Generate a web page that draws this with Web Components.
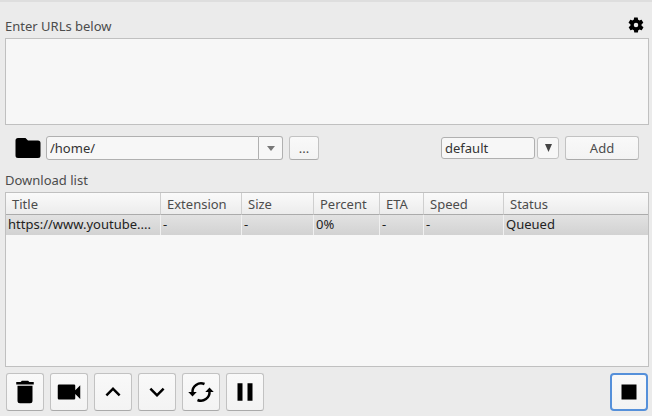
<!DOCTYPE html>
<html lang="en">
<head>
<meta charset="utf-8">
<meta name="viewport" content="width=device-width, initial-scale=1">
<title>Downloads</title>
<style>
  html, body {
    height: 100%;
    margin: 0;
  }

  body {
    background: #ebebeb;
    color: #4c4c4c;
    font: 13px/20px "Noto Sans", "Open Sans", sans-serif;
  }
</style>
</head>
<body>
<download-window></download-window>

<script>
const ICONS = {
  gear: '<path d="M19.4 13c0-.3.1-.7.1-1s0-.7-.1-1l2.1-1.6c.2-.2.2-.4.1-.6l-2-3.5c-.1-.2-.4-.3-.6-.2l-2.5 1c-.5-.4-1.1-.7-1.7-1l-.4-2.6c0-.3-.2-.5-.5-.5h-4c-.2 0-.4.2-.5.4L9 5.1c-.6.3-1.1.6-1.7 1l-2.5-1c-.2-.1-.5 0-.6.2l-2 3.5c-.1.2-.1.5.1.6L4.6 11c0 .3-.1.7-.1 1s0 .7.1 1l-2.1 1.6c-.2.2-.2.4-.1.6l2 3.5c.1.2.4.3.6.2l2.5-1c.5.4 1.1.7 1.7 1l.4 2.6c0 .3.2.5.5.5h4c.2 0 .5-.2.5-.4l.4-2.7c.6-.3 1.1-.6 1.7-1l2.5 1c.2.1.5 0 .6-.2l2-3.5c.1-.2.1-.5-.1-.6zM12 15a3 3 0 1 1 0-6 3 3 0 0 1 0 6z"/>',
  folder: '<path d="M10 4H4a2 2 0 0 0-2 2v12a2 2 0 0 0 2 2h16a2 2 0 0 0 2-2V8a2 2 0 0 0-2-2h-8z"/>',
  trash: '<path d="M6 19a2 2 0 0 0 2 2h8a2 2 0 0 0 2-2V7H6zM19 4h-3.5l-1-1h-5l-1 1H5v2h14z"/>',
  camera: '<path d="M17 10.5V7a1 1 0 0 0-1-1H4a1 1 0 0 0-1 1v10a1 1 0 0 0 1 1h12a1 1 0 0 0 1-1v-3.5l4 4v-11z"/>',
  up: '<path d="M7.4 15.4 12 10.8l4.6 4.6L18 14l-6-6-6 6z"/>',
  down: '<path d="M7.4 8.6 12 13.2l4.6-4.6L18 10l-6 6-6-6z"/>',
  reload: '<path d="M5.2 12.5A6.9 6.9 0 0 1 14.8 5.6M18.8 11.5A6.9 6.9 0 0 1 9.2 18.4" fill="none" stroke="currentColor" stroke-width="2"/><path d="M1.8 12h6.8l-3.4 3.6zM22.2 12h-6.8l3.4-3.6z"/>',
  pause: '<path d="M6 19h4V5H6zM14 5v14h4V5z"/>',
  stop: '<path d="M6 6h12v12H6z"/>'
};

class AppIcon extends HTMLElement {
  constructor() {
    super();
    this.attachShadow({ mode: 'open' });
  }

  connectedCallback() {
    this.shadowRoot.innerHTML = `
    <style>
    :host {
      display: block;
      width: var(--icon-size, 30px);
      height: var(--icon-size, 30px);
      color: #000;
    }
    svg {
      display: block;
      width: 100%;
      height: 100%;
      fill: currentColor;
    }
    </style>
    <svg viewBox="0 0 24 24" aria-hidden="true">${ICONS[this.getAttribute('name')]}</svg>
    `;
  }
}

class PushButton extends HTMLElement {
  constructor() {
    super();
    this.attachShadow({ mode: 'open' });
  }

  connectedCallback() {
    const label = this.getAttribute('label');
    this.shadowRoot.innerHTML = `
    <style>
    :host {
      display: block;
      height: 24px;
    }
    :host([kind="tool"]) {
      width: 38px;
      height: 38px;
    }
    :host([kind="flat"]) {
      --icon-size: 18px;
      width: 18px;
      height: 18px;
    }
    button {
      display: flex;
      align-items: center;
      justify-content: center;
      box-sizing: border-box;
      width: 100%;
      height: 100%;
      padding: 0;
      border: 1px solid #c2c2c2;
      border-bottom-color: #aaa;
      border-radius: 3px;
      background: linear-gradient(#f9f9f9, #f3f3f3);
      color: inherit;
      font: inherit;
    }
    :host([kind="flat"]) button {
      border: 0;
      background: none;
    }
    :host([current]) button {
      border: 2px solid #5590da;
      border-radius: 4px;
    }
    </style>
    <button type="button" ${label ? `aria-label="${label}"` : ''}><slot></slot></button>
    `;
  }
}

class DropDown extends HTMLElement {
  constructor() {
    super();
    this.attachShadow({ mode: 'open' });
  }

  connectedCallback() {
    this.shadowRoot.innerHTML = `
    <style>
    :host {
      display: grid;
      grid-template-columns: 1fr 24px;
      height: 24px;
      color: #333;
    }
    :host([split]) {
      grid-template-columns: 1fr 22px;
      column-gap: 2px;
      height: 22px;
    }
    .field, .arrow {
      grid-row: 1;
      box-sizing: border-box;
      border: 1px solid #b0b0b0;
      background: #f7f7f7;
    }
    .field {
      grid-column: 1;
      border-radius: 3px 0 0 3px;
    }
    .arrow {
      display: grid;
      place-items: center;
      grid-column: 2;
      border-left: 0;
      border-radius: 0 3px 3px 0;
    }
    :host([split]) .field {
      border-radius: 3px;
    }
    :host([split]) .arrow {
      border: 1px solid #c2c2c2;
      border-radius: 3px;
    }
    svg {
      width: 8px;
      height: 5px;
      fill: #777;
    }
    :host([split]) svg {
      width: 7px;
      height: 8px;
      fill: #444;
    }
    select {
      grid-area: 1 / 1 / 2 / 3;
      appearance: none;
      min-width: 0;
      padding: 0 4px;
      border: 0;
      background: transparent;
      color: inherit;
      font: inherit;
    }
    </style>
    <span class="field"></span>
    <span class="arrow"><svg viewBox="0 0 8 8" preserveAspectRatio="none" aria-hidden="true"><path d="M0 0h8L4 8z"/></svg></span>
    <select aria-label="${this.getAttribute('label')}"><option>${this.getAttribute('value')}</option></select>
    `;
  }
}

class DownloadList extends HTMLElement {
  constructor() {
    super();
    this.attachShadow({ mode: 'open' });
  }

  connectedCallback() {
    this.shadowRoot.innerHTML = `
    <style>
    :host {
      display: block;
      box-sizing: border-box;
      border: 1px solid #c0c0c0;
      background: #f7f7f7;
      overflow: hidden;
    }
    table {
      width: 100%;
      table-layout: fixed;
      border-collapse: separate;
      border-spacing: 0;
    }
    .title { width: 155px; }
    .wide { width: 81px; }
    .size { width: 72px; }
    .percent { width: 66px; }
    .eta { width: 44px; }
    .speed { width: 80px; }
    th, td {
      box-sizing: border-box;
      overflow: hidden;
      text-align: left;
      text-overflow: ellipsis;
      white-space: nowrap;
    }
    th {
      height: 22px;
      padding: 0 6px;
      border-right: 1px solid #cfcfcf;
      border-bottom: 1px solid #ababab;
      background: linear-gradient(#fafafa, #ececec);
      font-weight: normal;
    }
    td {
      height: 20px;
      padding: 0 2px 2px;
      border-right: 1px solid #f0f0f0;
      background: linear-gradient(#e2e2e2, #d2d2d2);
      color: #222;
      line-height: 18px;
    }
    th:last-child, td:last-child {
      border-right: 0;
    }
    </style>
    <table>
      <colgroup>
        <col class="title"><col class="wide"><col class="size"><col class="percent">
        <col class="eta"><col class="speed"><col>
      </colgroup>
      <thead>
        <tr><th>Title</th><th>Extension</th><th>Size</th><th>Percent</th><th>ETA</th><th>Speed</th><th>Status</th></tr>
      </thead>
      <tbody>
        <tr><td>https://www.youtube....</td><td>-</td><td>-</td><td>0%</td><td>-</td><td>-</td><td>Queued</td></tr>
      </tbody>
    </table>
    `;
  }
}

class DownloadWindow extends HTMLElement {
  constructor() {
    super();
    this.attachShadow({ mode: 'open' });
  }

  connectedCallback() {
    this.shadowRoot.innerHTML = `
    <style>
    :host {
      display: flex;
      flex-direction: column;
      box-sizing: border-box;
      height: 100%;
      padding: 14px 3px 5px 5px;
      border-top: 2px solid #dedede;
    }
    .top {
      display: flex;
      justify-content: space-between;
      padding-right: 4px;
      margin-bottom: 2px;
    }
    textarea {
      display: block;
      box-sizing: border-box;
      width: 100%;
      height: 87px;
      padding: 4px;
      border: 1px solid #c0c0c0;
      background: #f7f7f7;
      color: inherit;
      font: inherit;
      resize: none;
    }
    .save {
      display: flex;
      align-items: center;
      gap: 6px;
      margin: 8px 10px 7px 8px;
    }
    .save app-icon {
      margin-right: -3px;
    }
    .path { width: 237px; }
    .browse { width: 30px; }
    .format {
      width: 118px;
      margin-left: auto;
    }
    .add { width: 74px; }
    download-list {
      flex: 1;
      min-height: 60px;
      margin: 2px 0 6px;
    }
    .tools {
      display: flex;
      gap: 6px;
      padding: 0 1px;
    }
    .stop {
      margin-left: auto;
    }
    </style>
    <div class="top">
      <label for="urls">Enter URLs below</label>
      <push-button kind="flat" label="Settings"><app-icon name="gear"></app-icon></push-button>
    </div>
    <textarea id="urls"></textarea>
    <div class="save">
      <app-icon name="folder"></app-icon>
      <drop-down class="path" label="Save path" value="/home/"></drop-down>
      <push-button class="browse">...</push-button>
      <drop-down class="format" split label="Format" value="default"></drop-down>
      <push-button class="add">Add</push-button>
    </div>
    <div>Download list</div>
    <download-list></download-list>
    <div class="tools">
      <push-button kind="tool" label="Delete"><app-icon name="trash"></app-icon></push-button>
      <push-button kind="tool" label="Play"><app-icon name="camera"></app-icon></push-button>
      <push-button kind="tool" label="Move up"><app-icon name="up"></app-icon></push-button>
      <push-button kind="tool" label="Move down"><app-icon name="down"></app-icon></push-button>
      <push-button kind="tool" label="Reload"><app-icon name="reload"></app-icon></push-button>
      <push-button kind="tool" label="Pause"><app-icon name="pause"></app-icon></push-button>
      <push-button class="stop" kind="tool" current label="Stop"><app-icon name="stop"></app-icon></push-button>
    </div>
    `;
  }
}

customElements.define('app-icon', AppIcon);
customElements.define('push-button', PushButton);
customElements.define('drop-down', DropDown);
customElements.define('download-list', DownloadList);
customElements.define('download-window', DownloadWindow);
</script>
</body>
</html>
